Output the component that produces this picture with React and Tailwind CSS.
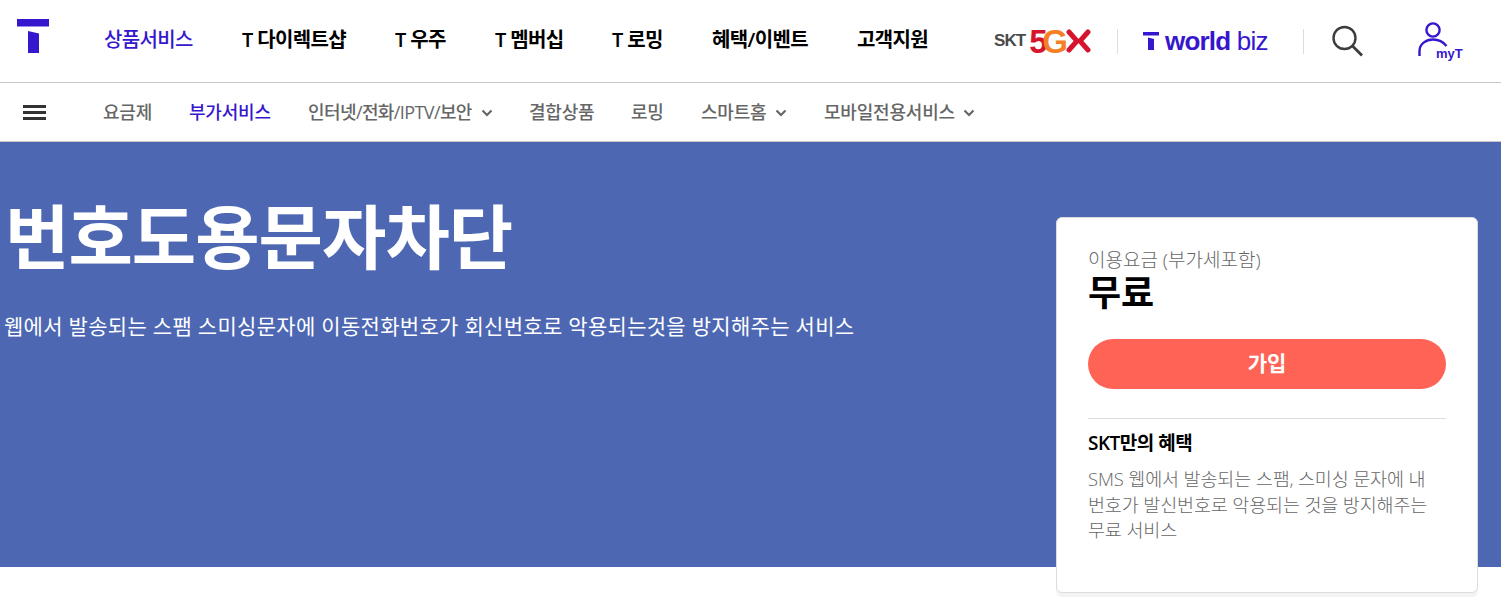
import React from 'react';

const FONT = "font-['Open_Sans','Noto_Sans_CJK_KR',sans-serif]";

const mainMenu = [
  { label: '상품서비스', active: true, w: 'w-[89px]', gap: 'mr-[49px]' },
  { label: 'T 다이렉트샵', w: 'w-[104px]', gap: 'mr-[49px]' },
  { label: 'T 우주', w: 'w-[51px]', gap: 'mr-[49px]' },
  { label: 'T 멤버십', w: 'w-[68px]', gap: 'mr-[49px]' },
  { label: 'T 로밍', w: 'w-[51px]', gap: 'mr-[49px]' },
  { label: '혜택/이벤트', w: 'w-[96px]', gap: 'mr-[49px]' },
  { label: '고객지원', w: 'w-[71px]', gap: '' },
];

const subMenu = [
  { label: '요금제', w: 'w-[49px]', gap: 'mr-[37px]', track: 'tracking-[-0.2px]' },
  { label: '부가서비스', active: true, w: 'w-[82px]', gap: 'mr-[37px]', track: 'tracking-[-0.2px]' },
  { label: '인터넷/전화/IPTV/보안', arrow: true, w: 'w-[164px]', gap: 'mr-[36px]', track: 'tracking-[-0.6px]' },
  { label: '결합상품', w: 'w-[65px]', gap: 'mr-[37px]', track: 'tracking-[-0.2px]' },
  { label: '로밍', w: 'w-[33px]', gap: 'mr-[37px]', track: 'tracking-[-0.2px]' },
  { label: '스마트홈', arrow: true, w: 'w-[65px]', gap: 'mr-[37px]', track: 'tracking-[-0.2px]' },
  { label: '모바일전용서비스', arrow: true, w: 'w-[130px]', gap: '', track: 'tracking-[-0.2px]' },
];

function Chevron() {
  return (
    <svg width="12" height="8" viewBox="0 0 12 8" className="ml-[9px] mt-px shrink-0">
      <path d="M1.5 1.5 6 6l4.5-4.5" fill="none" stroke="#666" strokeWidth="2.2" />
    </svg>
  );
}

function TLogo({ className }) {
  return (
    <svg viewBox="0 0 32 34" className={className}>
      <path d="M0 0h32v7.5H0z" fill="#3617ce" />
      <path d="M11 12l11 2.5V34H11z" fill="#3617ce" />
    </svg>
  );
}

function Header() {
  return (
    <header className="h-[83px] border-b border-[#c8c8c8] bg-white flex items-center relative">
      <TLogo className="w-[32px] h-[34px] ml-[17px] mb-[11px] shrink-0" />
      <nav className="flex items-center ml-[55px] mb-[2px]">
        {mainMenu.map((item) => (
          <a
            key={item.label}
            className={`${item.w} ${item.gap} whitespace-nowrap text-[20px] tracking-[-0.65px] ${
              item.active ? 'text-[#3617ce] font-medium' : 'text-black font-semibold'
            }`}
          >
            {item.label}
          </a>
        ))}
      </nav>
      <div className="flex items-center ml-[66px]">
        <div className="w-[97px] flex items-center font-['Liberation_Sans',sans-serif]">
          <span className="text-[17px] font-bold text-[#4a4a4a] tracking-[-0.9px]">SKT</span>
          <span className="ml-[4px] text-[33px] leading-none font-bold tracking-[-5.5px] text-[#d5152e]">
            5<span className="text-[#f58025]">G</span>
          </span>
          <svg width="25" height="24" viewBox="0 0 25 24" className="ml-[4px] shrink-0">
            <path d="M3 3l8 9-8 9M22 3l-8 9 8 9" fill="none" stroke="#d5152e" strokeWidth="5" strokeLinecap="round" />
          </svg>
        </div>
        <div className="ml-[26px] w-px h-[25px] bg-[#ddd]" />
        <div className="ml-[25px] flex items-center w-[125px]">
          <svg viewBox="0 0 16 18" className="w-[16px] h-[18px] shrink-0">
            <path d="M0 0h16v3.5H0zM5 5.5l6 1.5v11H5z" fill="#3617ce" />
          </svg>
          <span className="ml-[6px] whitespace-nowrap text-[26px] leading-none tracking-[-0.8px] text-[#3617ce] font-['Liberation_Sans',sans-serif]">
            <b>world</b> biz
          </span>
        </div>
        <div className="ml-[35px] w-px h-[25px] bg-[#ddd]" />
        <svg width="32" height="32" viewBox="0 0 32 32" className="ml-[27px] shrink-0">
          <circle cx="13.5" cy="13" r="11" fill="none" stroke="#3c3c3c" strokeWidth="2.4" />
          <path d="M21.5 21 31 30.5" fill="none" stroke="#3c3c3c" strokeWidth="2.8" />
        </svg>
        <div className="relative ml-[55px] w-[44px] h-[38px] shrink-0">
          <svg width="30" height="35" viewBox="0 0 30 35" className="absolute left-0 top-0">
            <circle cx="15" cy="8" r="6.6" fill="none" stroke="#3617ce" strokeWidth="2.4" />
            <path d="M1.5 34v-5C1.5 22 8 17.5 15 17.5c5 0 10 2 13.5 6.5" fill="none" stroke="#3617ce" strokeWidth="2.4" />
          </svg>
          <span className="absolute left-[18px] top-[25px] text-[13px] leading-none font-bold text-[#3617ce] font-['Liberation_Sans',sans-serif]">
            myT
          </span>
        </div>
      </div>
    </header>
  );
}

function SubNav() {
  return (
    <div className="h-[59px] border-b border-[#c8c8c8] bg-white flex items-center">
      <div className="ml-[23px] w-[23px] flex flex-col gap-[3px] shrink-0">
        <span className="h-[3px] bg-[#333]" />
        <span className="h-[3px] bg-[#333]" />
        <span className="h-[3px] bg-[#333]" />
      </div>
      <nav className="flex items-center ml-[57px]">
        {subMenu.map((item) => (
          <div key={item.label} className={`flex items-center ${item.gap}`}>
            <a
              className={`${item.w} ${item.track} whitespace-nowrap text-[18px] font-medium ${
                item.active ? 'text-[#3617ce]' : 'text-[#666]'
              }`}
            >
              {item.label}
            </a>
            {item.arrow && <Chevron />}
          </div>
        ))}
      </nav>
    </div>
  );
}

function PriceCard() {
  return (
    <aside className="absolute right-[23px] top-[75px] w-[422px] h-[376px] rounded-[6px] border border-[#ddd] bg-white px-[31px] pt-[28px] shadow-[0_4px_0_0_#f3f3f3]">
      <p className="text-[19px] leading-[28px] text-[#666] font-light">이용요금 (부가세포함)</p>
      <p className="text-[36px] leading-[38px] font-bold text-black">무료</p>
      <button className="mt-[27px] block w-[358px] h-[50px] rounded-full bg-[#ff6355] text-white text-[21px] font-bold">
        가입
      </button>
      <div className="mt-[29px] w-[358px] border-t border-[#ddd] pt-[11px]">
        <h3 className="text-[19px] leading-[26px] font-semibold text-black tracking-[-0.5px]">SKT만의 혜택</h3>
        <p className="mt-[10px] text-[18.5px] leading-[25.5px] whitespace-nowrap text-[#666] font-light tracking-[-0.15px]">
          SMS 웹에서 발송되는 스팸, 스미싱 문자에 내
          <br />
          번호가 발신번호로 악용되는 것을 방지해주는
          <br />
          무료 서비스
        </p>
      </div>
    </aside>
  );
}

export default function App() {
  return (
    <div className={`${FONT} min-h-[609px] bg-white overflow-hidden`}>
      <Header />
      <SubNav />
      <section className="relative h-[425px] bg-[#4d67b3] text-white">
        <h1 className="pl-[5px] pt-[50px] text-[70px] leading-[90px] font-semibold tracking-[-1px]">번호도용문자차단</h1>
        <p className="pl-[4px] mt-[29px] text-[21px] leading-[30px] font-normal tracking-[0.3px] whitespace-nowrap">
          웹에서 발송되는 스팸 스미싱문자에 이동전화번호가 회신번호로 악용되는것을 방지해주는 서비스
        </p>
        <PriceCard />
      </section>
    </div>
  );
}
